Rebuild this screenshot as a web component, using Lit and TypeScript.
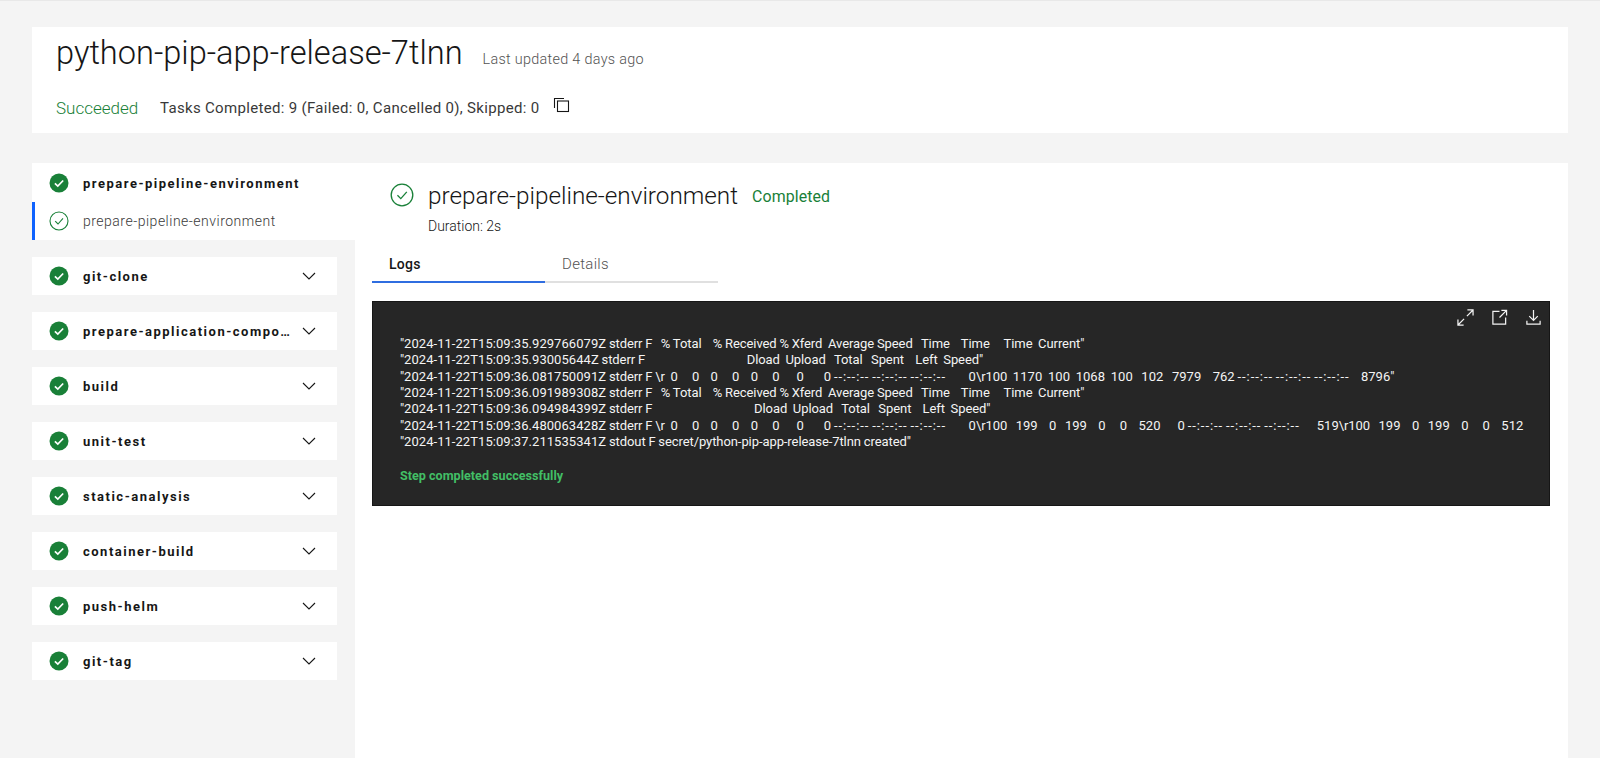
import { LitElement, html, css, svg } from "lit";
import { customElement } from "lit/decorators.js";

const tasks = ["git-clone", "prepare-application-components", "build", "unit-test", "static-analysis", "container-build", "push-helm", "git-tag"];

const logs = [
  `"2024-11-22T15:09:35.929766079Z stderr F   % Total    % Received % Xferd  Average Speed   Time    Time     Time  Current"`,
  `"2024-11-22T15:09:35.93005644Z stderr F                                    Dload  Upload   Total   Spent    Left  Speed"`,
  `"2024-11-22T15:09:36.081750091Z stderr F \\r  0     0    0     0    0     0      0       0 --:--:-- --:--:-- --:--:--        0\\r100  1170  100  1068  100   102   7979    762 --:--:-- --:--:-- --:--:--    8796"`,
  `"2024-11-22T15:09:36.091989308Z stderr F   % Total    % Received % Xferd  Average Speed   Time    Time     Time  Current"`,
  `"2024-11-22T15:09:36.094984399Z stderr F                                    Dload  Upload   Total   Spent    Left  Speed"`,
  `"2024-11-22T15:09:36.480063428Z stderr F \\r  0     0    0     0    0     0      0       0 --:--:-- --:--:-- --:--:--        0\\r100   199    0   199    0     0    520      0 --:--:-- --:--:-- --:--:--      519\\r100   199    0   199    0     0    512`,
  `"2024-11-22T15:09:37.211535341Z stdout F secret/python-pip-app-release-7tlnn created"`,
];

// Digit runs and clock placeholders are wider in the reference's typeface, so they get their own tracking.
const renderLine = (line: string) =>
  line.split(/(--:--:--|[0-9TZ:.\-]{4,}|\b\d+\b)/).map((part, i) =>
    i % 2 ? html`<span class=${part === "--:--:--" ? "dash" : "num"}>${part}</span>` : part
  );

const filledCheck = svg`<svg class="ico" viewBox="0 0 20 20"><circle cx="10" cy="10" r="9.5" fill="#198038"/><path d="M5.9 10.3l2.9 2.8 5.4-5.6" fill="none" stroke="#fff" stroke-width="1.7"/></svg>`;
const outlineCheck = svg`<svg class="ico" viewBox="0 0 20 20"><circle cx="10" cy="10" r="9" fill="none" stroke="#198038" stroke-width="1.1"/><path d="M6.2 10.2l2.8 2.8 5-5.6" fill="none" stroke="#198038" stroke-width="1.1"/></svg>`;
const chevron = svg`<svg class="chev" viewBox="0 0 16 16"><path d="M2 5l6 6 6-6" fill="none" stroke="#161616" stroke-width="1.1"/></svg>`;

@customElement("app-root")
export class AppRoot extends LitElement {
  static styles = css`
    :host { display: block; height: 758px; overflow: hidden; background: #f4f4f4; border-top: 1px solid #e8e8e8; box-sizing: border-box; font-family: "Roboto", "Liberation Sans", sans-serif; color: #161616; }
    .header { margin: 26px 32px 0; height: 106px; background: #fff; box-sizing: border-box; padding: 8px 24px 0; }
    .title-row { display: flex; align-items: baseline; gap: 20px; }
    h1 { margin: 0; font-size: 32.6px; font-weight: 300; line-height: 36px; }
    .updated { font-size: 14.4px; font-weight: 300; color: #525252; letter-spacing: 0.3px; }
    .status-row { display: flex; align-items: center; margin-top: 25px; height: 24px; font-size: 15px; letter-spacing: 0.32px; color: #393939; }
    .succeeded { color: #198038; font-size: 17px; font-weight: 300; letter-spacing: 0; width: 104px; }
    .copy { width: 18px; height: 18px; margin: -6px 0 0 14px; }
    .body { display: flex; margin: 30px 0 0 32px; }
    .side { width: 323px; flex: none; }
    .group { background: #fff; height: 77px; }
    .row { display: flex; align-items: center; padding-left: 17px; box-sizing: border-box; }
    .row.top { height: 39px; padding-top: 1px; }
    .row.sub { height: 38px; border-left: 3px solid #0f62fe; padding-left: 14px; font-size: 14px; font-weight: 300; letter-spacing: 0.5px; color: #393939; }
    .ico { width: 20px; height: 20px; flex: none; margin-right: 14px; }
    .name { font-size: 13px; font-weight: 700; letter-spacing: 1.5px; white-space: nowrap; overflow: hidden; text-overflow: ellipsis; flex: 1; color: #161616; }
    .card { background: #fff; width: 305px; height: 38px; margin-top: 17px; padding-right: 20px; }
    .chev { width: 16px; height: 16px; flex: none; margin-left: 10px; }
    .list { display: flex; flex-direction: column; }
    .main { flex: 1; background: #fff; height: 600px; margin-right: 32px; padding: 0 18px 0 17px; box-sizing: border-box; }
    .step { display: flex; align-items: center; padding: 12px 0 0 18px; height: 40px; }
    .step .ico { width: 24px; height: 24px; margin-right: 14px; }
    .step h2 { margin: 0; font-size: 24.3px; font-weight: 300; }
    .step .done { margin: 3px 0 0 14px; color: #198038; font-size: 15.9px; font-weight: 400; letter-spacing: 0.1px; }
    .duration { font-size: 14px; font-weight: 300; margin: 3px 0 0 56px; line-height: 16px; }
    .tabs { display: flex; width: 346px; margin-top: 20px; }
    .tab { flex: 1; height: 29px; box-sizing: border-box; padding-left: 17px; font-size: 15px; line-height: 20px; font-weight: 300; color: #525252; letter-spacing: 0.3px; border-bottom: 2px solid #e0e0e0; }
    .tab.on { color: #161616; font-weight: 500; font-size: 14px; border-bottom-color: #2f6de0; }
    .log { background: #262626; height: 205px; margin-top: 18px; border: 1px solid #161616; box-sizing: border-box; color: #f4f4f4; display: flex; flex-direction: column; }
    .tools { display: flex; justify-content: flex-end; gap: 17px; padding: 7px 7px 0 0; height: 18px; }
    .tools svg { width: 17px; height: 17px; }
    .lines { margin: 9px 0 0 27px; font-size: 13px; font-weight: 400; line-height: 16.33px; white-space: pre; letter-spacing: -0.08px; word-spacing: -0.32px; }
    .num { letter-spacing: 0.05px; }
    .dash { letter-spacing: 0.95px; }
    .ok { margin: 18px 0 0 27px; font-size: 12.6px; font-weight: 700; color: #42be65; line-height: 16px; }
  `;

  render() {
    return html`
      <div class="header">
        <div class="title-row"><h1>python-pip-app-release-7tlnn</h1><span class="updated">Last updated 4 days ago</span></div>
        <div class="status-row">
          <span class="succeeded">Succeeded</span>
          <span>Tasks Completed: 9 (Failed: 0, Cancelled 0), Skipped: 0</span>
          <svg class="copy" viewBox="0 0 18 18" fill="none" stroke="#161616" stroke-width="1.1"><path d="M1.5 12V2.5H11"/><rect x="4.5" y="5" width="11" height="10.5"/></svg>
        </div>
      </div>
      <div class="body">
        <div class="side">
          <div class="group">
            <div class="row top">${filledCheck}<span class="name">prepare-pipeline-environment</span></div>
            <div class="row sub">${outlineCheck}<span>prepare-pipeline-environment</span></div>
          </div>
          <div class="list">
            ${tasks.map((t) => html`<div class="row card">${filledCheck}<span class="name">${t}</span>${chevron}</div>`)}
          </div>
        </div>
        <div class="main">
          <div class="step">${outlineCheck}<h2>prepare-pipeline-environment</h2><span class="done">Completed</span></div>
          <div class="duration">Duration: 2s</div>
          <div class="tabs"><div class="tab on">Logs</div><div class="tab">Details</div></div>
          <div class="log">
            <div class="tools">
              <svg viewBox="0 0 18 18" fill="none" stroke="#f4f4f4" stroke-width="1.3"><path d="M11 1h6v6M17 1l-6.5 6.5M7 17H1v-6M1 17l6.5-6.5"/></svg>
              <svg viewBox="0 0 18 18" fill="none" stroke="#f4f4f4" stroke-width="1.3"><path d="M9 2.5H2v13.5h13.5V9M11 1.5h5.5V7M16.5 1.5L9 9"/></svg>
              <svg viewBox="0 0 18 18" fill="none" stroke="#f4f4f4" stroke-width="1.3"><path d="M9 1v11M4.5 7.5L9 12l4.5-4.5M2 12.5v3.5h14v-3.5"/></svg>
            </div>
            <div class="lines">${logs.map((l) => html`<div>${renderLine(l)}</div>`)}</div>
            <div class="ok">Step completed successfully</div>
          </div>
        </div>
      </div>
    `;
  }
}
